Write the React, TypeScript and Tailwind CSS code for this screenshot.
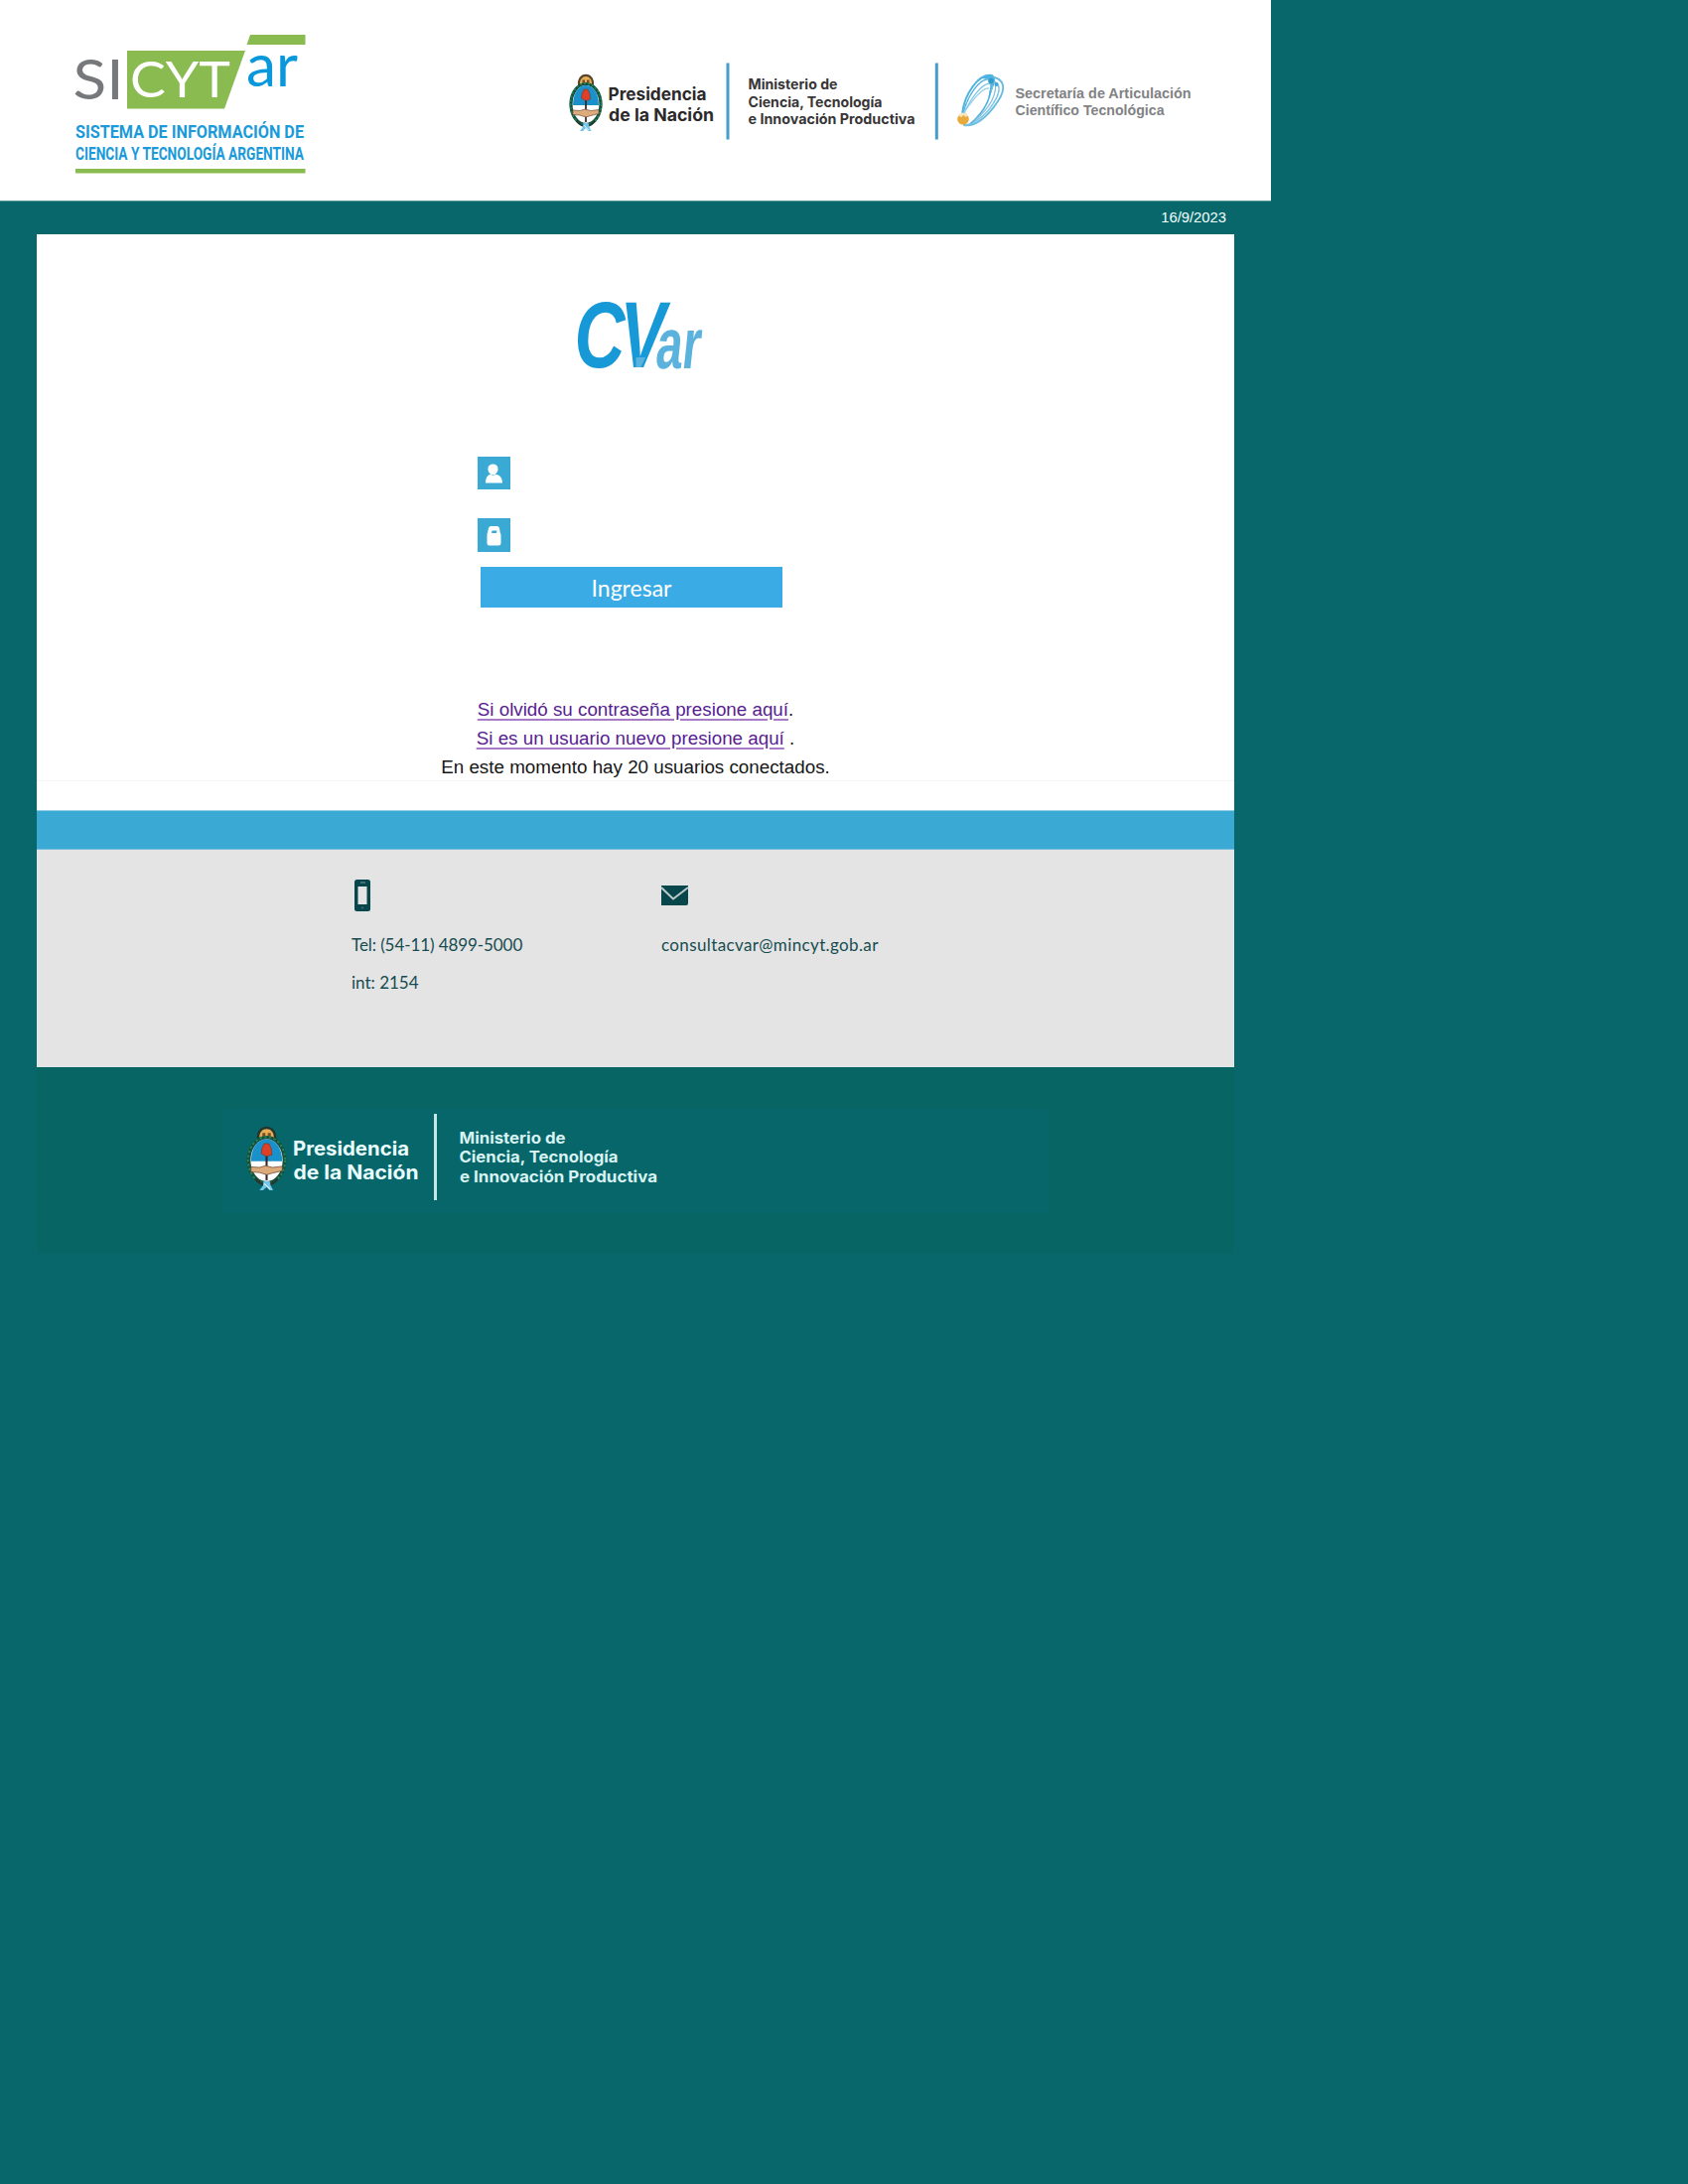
import React from "react";

type FitProps = {
  x: number;
  y: number;
  w: number;
  size: number;
  fill: string;
  font?: string;
  weight?: number;
  italic?: boolean;
  children: string;
};

// Logo lettering stretched to an exact width.
function Fit({ x, y, w, size, fill, font = "Inter", weight = 700, italic, children }: FitProps) {
  return (
    <text
      x={x}
      y={y}
      textLength={w}
      lengthAdjust="spacingAndGlyphs"
      fontSize={size}
      fontFamily={`"${font}", sans-serif`}
      fontWeight={weight}
      fontStyle={italic ? "italic" : "normal"}
      fill={fill}
    >
      {children}
    </text>
  );
}

function SicytarLogo() {
  return (
    <svg className="block shrink-0 overflow-visible" width="240" height="150" viewBox="72 30 240 150">
      <Fit x={73.500} y={100} w={51} size={57} fill="#77787b" font="Lato" weight={400}>SI</Fit>
      <polygon points="128,51 247,51 226,109.500 128,109.500" fill="#8abb50" />
      <Fit x={131} y={98} w={101} size={51} fill="#ffffff" font="Lato" weight={400}>CYT</Fit>
      <Fit x={248} y={86.500} w={52} size={60} fill="#0a97dc" font="Lato" weight={400}>ar</Fit>
      <polygon points="252,35 307.500,35 307.500,45 248.500,45" fill="#8abb50" />
      <Fit x={76} y={138.500} w={230} size={18.500} fill="#1b9ad9" font="Roboto">SISTEMA DE INFORMACIÓN DE</Fit>
      <Fit x={76} y={161} w={230} size={18.500} fill="#1b9ad9" font="Roboto">CIENCIA Y TECNOLOGÍA ARGENTINA</Fit>
      <rect x="76" y="170" width="231.500" height="4.500" fill="#8abb50" />
    </svg>
  );
}

function Emblem({ x, y, width, height, dark }: { x: number; y: number; width: number; height: number; dark?: boolean }) {
  return (
    <svg x={x} y={y} width={width} height={height} viewBox="0 0 34 58" preserveAspectRatio="none">
      <path d="M9 12C7.500 -3 26.500 -3 25 12Z" fill={dark ? "#24372f" : "#55432b"} />
      <path d="M11 11.500C10 0 24 0 23 11.500Z" fill="#e9ae55" />
      <path d="M13.500 6.500h2.500v3h-2.500zM18 6.500h2.500v3H18z" fill="#71502a" />
      <ellipse cx="17" cy="31" rx="15" ry="20.500" fill="#ffffff" stroke="#174f3c" strokeWidth="3.200" />
      <ellipse cx="17" cy="31" rx="15.500" ry="21" fill="none" stroke="#23875a" strokeWidth="1.600" strokeDasharray="2 2" />
      <path d="M4 32C4 19 10 12 17 12s13 7 13 20Z" fill="#1b91cb" />
      <path d="M17 24v25" stroke="#30251f" strokeWidth="1.700" />
      <path d="M12.500 25l.7-5 1.800-4h4l1.800 4 .7 6-4.500 1.500Z" fill="#dd3f27" stroke="#713025" strokeWidth="0.500" />
      <path d="M4 37l7 .5 5-1.500 6 1.500 8-1v4l-8 2-5 1.500-6-2-7-.5Z" fill="#dcab7b" stroke="#765039" strokeWidth="0.700" />
      <path d="M8 48c3 4 5 5 8 5M26 48c-3 4-5 5-8 5" stroke="#24392f" strokeWidth="2" fill="none" />
      <path d="M14.500 49.500l5 .5 1 4 2 4h-3L17 55l-3 3h-3l3-4Z" fill="#73c5ec" />
      <path d="M15 52l5 5" stroke="#e1f4fc" strokeWidth="0.900" />
    </svg>
  );
}

function GovernmentLogo() {
  return (
    <svg className="block shrink-0 overflow-visible" width="640" height="90" viewBox="565 58 640 90">
      <Emblem x={573} y={74} width={34} height={58} />
      <Fit x={612.500} y={100.500} w={99} size={17.500} fill="#2b292a">Presidencia</Fit>
      <Fit x={613} y={122} w={106} size={17.500} fill="#2b292a">de la Nación</Fit>
      <rect x="731.500" y="63.500" width="3" height="77" fill="#469dcc" />
      <Fit x={753.500} y={89.500} w={90} size={14} fill="#373536">Ministerio de</Fit>
      <Fit x={753.500} y={107.500} w={135} size={14} fill="#373536">Ciencia, Tecnología</Fit>
      <Fit x={753.500} y={125} w={168} size={14} fill="#373536">e Innovación Productiva</Fit>
      <rect x="941.800" y="63.500" width="3" height="77" fill="#469dcc" />
      <g fill="none" stroke="#51b2df" strokeLinecap="round">
        <path d="M969 115C971 95 986 73 999 76C1004 79 999 88 997 93" strokeWidth="1.900" />
        <path d="M970 114C974 98 986 78 997 80C1002 83 998 91 997 94" strokeWidth="1.400" strokeDasharray="3 1" />
        <path d="M971 114C977 101 988 84 997 84C1001 87 998 92 996 97" strokeWidth="1.400" stroke="#82c9e9" />
        <path d="M971 113C979 102 989 88 996 89" strokeWidth="1.200" stroke="#92cce7" />
        <path d="M997 77C1013 79 1013 90 1005 102C994 119 981 128 971 126" strokeWidth="1.900" stroke="#69bce0" />
        <path d="M999 82C1009 83 1007 94 1001 103C994 115 984 123 973 126" strokeWidth="1.600" stroke="#80c5e3" strokeDasharray="3 1" />
        <path d="M998 82C999 96 993 111 978 124" strokeWidth="1.600" />
        <path d="M1002 82C1005 94 997 109 982 121" strokeWidth="1.300" stroke="#84bddd" />
      </g>
      <path d="M988 79C994 73 1000 74 1001 80L996 85L999 80Z" fill="#4db4e2" />
      <circle cx="998" cy="81.500" r="2.800" fill="#3299cc" />
      <circle cx="1003.500" cy="85" r="2" fill="#42a4d2" />
      <circle cx="970" cy="120" r="5.800" fill="#e7aa3b" />
      <path d="M965.500 117l3 1 2-2 2 2 2-1-1-3-5-.5Z" fill="#f8e5b9" />
      <Fit x={1022.500} y={98.500} w={177} size={15.500} fill="#818284" font="Liberation Sans">Secretaría de Articulación</Fit>
      <Fit x={1022.500} y={116} w={150} size={15.500} fill="#818284" font="Liberation Sans">Científico Tecnológica</Fit>
    </svg>
  );
}

function CvarLogo() {
  return (
    <svg className="block overflow-visible" width="140" height="84" viewBox="575 296 140 84">
      <Fit x={578.500} y={370} w={51} size={94} fill="#1798d7" font="Liberation Sans" italic>C</Fit>
      <g transform="translate(620 370) skewX(-8.6)">
        <Fit x={0} y={0} w={46} size={95} fill="#1798d7" font="Liberation Sans">V</Fit>
      </g>
      <path d="M640.500 360H650L645.500 370H640.500Z" fill="#5bb2dc" />
      <g transform="translate(659 371) skewX(-6)">
        <Fit x={0} y={0} w={45} size={72} fill="#5bb2dc" font="Liberation Sans">ar</Fit>
      </g>
    </svg>
  );
}

function FooterLogo() {
  return (
    <svg className="block overflow-visible" width="830" height="105" viewBox="225 1117 830 105">
      <Emblem x={248} y={1134} width={41} height={65} dark />
      <Fit x={295} y={1163.500} w={117} size={20} fill="#eaffff">Presidencia</Fit>
      <Fit x={295.500} y={1188} w={126} size={20} fill="#eaffff">de la Nación</Fit>
      <rect x="437" y="1122" width="3" height="87" fill="#c6e7e7" />
      <Fit x={462.500} y={1151.500} w={107} size={16} fill="#d8f3f3">Ministerio de</Fit>
      <Fit x={462.500} y={1171} w={160} size={16} fill="#d8f3f3">Ciencia, Tecnología</Fit>
      <Fit x={463} y={1191} w={199} size={16} fill="#d8f3f3">e Innovación Productiva</Fit>
    </svg>
  );
}

export default function App() {
  return (
    <div className="min-h-[2200px] bg-[#08676a] font-['Liberation_Sans',Arial,sans-serif]">
      <div className="w-[1280px]">
        <header className="flex h-[202px] items-start bg-white pl-[72px]">
          <div className="pt-[30px]"><SicytarLogo /></div>
          <div className="ml-[253px] pt-[58px]"><GovernmentLogo /></div>
        </header>
        <div className="flex h-[34px] items-center justify-end border-t border-[#559698] pr-[45px] text-[14.800px] leading-none text-[#f3ffff]">
          16/9/2023
        </div>
        <div className="mx-[37px] w-[1206px]">
          <main className="flex h-[580px] flex-col bg-white">
            <div className="ml-[538px] pt-[60px]"><CvarLogo /></div>
            <form className="mt-[80px] flex flex-col">
              <span className="ml-[444px] size-[33px] bg-[#3aaad5]">
                <svg className="block" width="33" height="33" viewBox="0 0 33 33" fill="white">
                  <path d="M15.500 7.500c6 0 6.500 7 2.500 10v1h-5v-1c-4-3-3.500-10 2.500-10Z" />
                  <path d="M8 26.500c0-5 2-8 5-8.500 1.500 1.500 4 1.500 5.500 0 4 0 6.500 4 6.500 8.500Z" />
                </svg>
              </span>
              <span className="ml-[444px] mt-[29px] h-[34px] w-[33px] bg-[#3aaad5]">
                <svg className="block" width="33" height="34" viewBox="0 0 33 34">
                  <path d="M10 14.500l1-4.500q.5-2 2.500-2h6q2 0 2.500 2l.7 4.500q.8 1 .8 3v7.500q0 2.500-2.500 2.500h-9q-2.500 0-2.500-2.500v-7.500q0-2 .5-3Z" fill="white" />
                  <path d="M14.500 12.500h5l-.5 2.500h-5Z" fill="#3aaad5" />
                </svg>
              </span>
              <button type="button" className="ml-[447px] mt-[15px] flex h-[41px] w-[304px] items-center justify-center bg-[#3aabe4] pt-px font-['Lato',sans-serif] text-[23px] leading-none text-white">
                Ingresar
              </button>
            </form>
            <div className="mt-[88px] h-[86px] text-center text-[18.800px] leading-[29px] text-[#161616]">
              <p><a href="#" className="text-[#571d91] underline decoration-[#a77bc6] decoration-2 underline-offset-[3px]">Si olvidó su contraseña presione aquí</a>.</p>
              <p><a href="#" className="text-[#571d91] underline decoration-[#a77bc6] decoration-2 underline-offset-[3px]">Si es un usuario nuevo presione aquí</a> .</p>
              <p>En este momento hay 20 usuarios conectados.</p>
            </div>
            <div className="h-px bg-[#f4f4f4]" />
          </main>
          <div className="h-10 border-y border-t-[#92cde5] border-b-[#79bdda] bg-[#3aaad5]" />
          <section className="flex h-[219px] bg-[#e4e4e4] pl-[317px] font-['Lato',sans-serif] text-[17px] leading-[38px] text-[#164c50]">
            <div className="w-[312px]">
              <svg className="ml-[3px] mt-[30px] block" width="17" height="32" viewBox="0 0 17 32">
                <rect x="0" y="0" width="16" height="32" rx="2.500" fill="#07474c" />
                <rect x="3.500" y="7" width="9" height="18" fill="#e4e4e4" />
                <path d="M6 3h5" stroke="#7d9ea0" />
                <circle cx="8" cy="28.500" r="1" fill="#477477" />
              </svg>
              <p className="mt-[15px] tracking-[-0.08px]">Tel: (54-11) 4899-5000</p>
              <p>int: 2154</p>
            </div>
            <div>
              <svg className="mt-[36px] block" width="28" height="20" viewBox="0 0 28 20">
                <path d="M0 0h27v18q0 2-2 2H0Z" fill="#07474c" />
                <path d="M0 2l12 11.500L27 2" stroke="#bdc9ca" strokeWidth="2" fill="none" />
              </svg>
              <p className="mt-[21px] tracking-[0.37px]">consultacvar@mincyt.gob.ar</p>
            </div>
          </section>
          <footer className="h-[188px] bg-[#076664] pl-[188px] pt-[42px]">
            <div className="w-[830px] bg-[#07666a]"><FooterLogo /></div>
          </footer>
        </div>
      </div>
    </div>
  );
}
